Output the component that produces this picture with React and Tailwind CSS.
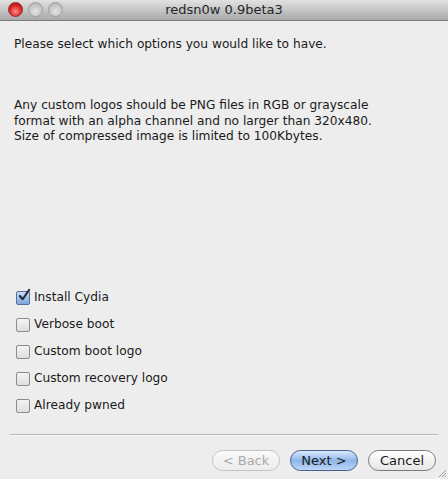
import React from 'react';

const options = [
  { label: 'Install Cydia', checked: true },
  { label: 'Verbose boot', checked: false },
  { label: 'Custom boot logo', checked: false },
  { label: 'Custom recovery logo', checked: false },
  { label: 'Already pwned', checked: false },
];

function Light({ red }) {
  return red ? (
    <span className="w-[15px] h-[15px] rounded-full border border-[#9a2a2a] bg-[radial-gradient(circle_at_50%_65%,#ff8a8a,#d42020_60%,#8e1010)]" />
  ) : (
    <span className="w-[15px] h-[15px] rounded-full border border-[#a0a0a0] bg-[radial-gradient(circle_at_50%_65%,#e4e4e4,#c4c4c4_60%,#a8a8a8)]" />
  );
}

function Checkbox({ checked }) {
  return (
    <span
      className={
        'relative w-[14px] h-[14px] rounded-[2px] border ' +
        (checked
          ? 'border-[#5a6f9a] bg-gradient-to-b from-[#c9dcf5] to-[#7ea6db]'
          : 'border-[#8c8c8c] bg-gradient-to-b from-[#f4f4f4] to-[#dedede]')
      }
    >
      {checked && (
        <svg viewBox="0 0 14 14" className="absolute left-[1px] top-[-3px] w-[13px] h-[13px] overflow-visible">
          <path d="M2 7.5 L5 11 L12 1" fill="none" stroke="#1f2a44" strokeWidth="2.2" strokeLinecap="round" strokeLinejoin="round" />
        </svg>
      )}
    </span>
  );
}

function Button({ children, variant }) {
  const base = 'h-[21px] rounded-full text-[13px] flex items-center justify-center border ';
  const styles = {
    disabled: 'w-[68px] border-[#c4c4c4] bg-gradient-to-b from-[#fafafa] to-[#ececec] text-[#a8a8a8]',
    primary: 'w-[68px] border-[#4a5f8c] bg-gradient-to-b from-[#dbe9fb] via-[#8fb6ea] to-[#bcd6f7] text-[#1a1a1a]',
    normal: 'w-[68px] border-[#7a7a7a] bg-gradient-to-b from-[#ffffff] to-[#e6e6e6] text-[#1a1a1a]',
  };
  return <div className={base + styles[variant]}>{children}</div>;
}

export default function App() {
  return (
    <div className="w-[448px] h-[479px] bg-[#ededed] flex flex-col font-['DejaVu_Sans',sans-serif] text-[#1a1a1a] overflow-hidden">
      {/* title bar */}
      <div className="relative h-[21px] shrink-0 bg-gradient-to-b from-[#e2e2e2] to-[#a9a9a9] border-b border-[#7c7c7c] flex items-center justify-center">
        <div className="absolute left-[8px] top-[2px] flex gap-[5px]">
          <Light red />
          <Light />
          <Light />
        </div>
        <span className="text-[13px] text-[#262626]">redsn0w 0.9beta3</span>
      </div>

      <div className="flex-1 flex flex-col pl-[14px] pr-[10px]">
        <p className="mt-[15px] text-[12.2px] leading-[16px]">Please select which options you would like to have.</p>
        <p className="mt-[46px] text-[12.2px] leading-[15.5px]">
          Any custom logos should be PNG files in RGB or grayscale
          <br />
          format with an alpha channel and no larger than 320x480.
          <br />
          Size of compressed image is limited to 100Kbytes.
        </p>

        <div className="mt-[145px] flex flex-col gap-[11px] pl-[2px]">
          {options.map((o) => (
            <div key={o.label} className="flex items-center gap-[4px] h-[16px]">
              <Checkbox checked={o.checked} />
              <span className="text-[12.2px]">{o.label}</span>
            </div>
          ))}
        </div>
      </div>

      <div className="mx-[9px] h-[2px] bg-[#b8b8b8] border-b border-[#f8f8f8] shrink-0" />

      <div className="relative h-[43px] shrink-0 flex items-start justify-end gap-[10px] pr-[12px] pt-[14px]">
        <Button variant="disabled">&lt; Back</Button>
        <Button variant="primary">Next &gt;</Button>
        <Button variant="normal">Cancel</Button>
        <svg className="absolute right-[1px] bottom-[1px] w-[10px] h-[10px]" viewBox="0 0 10 10">
          <path d="M9 2 L2 9 M9 5 L5 9 M9 8 L8 9" stroke="#9a9a9a" strokeWidth="1" />
        </svg>
      </div>
    </div>
  );
}
